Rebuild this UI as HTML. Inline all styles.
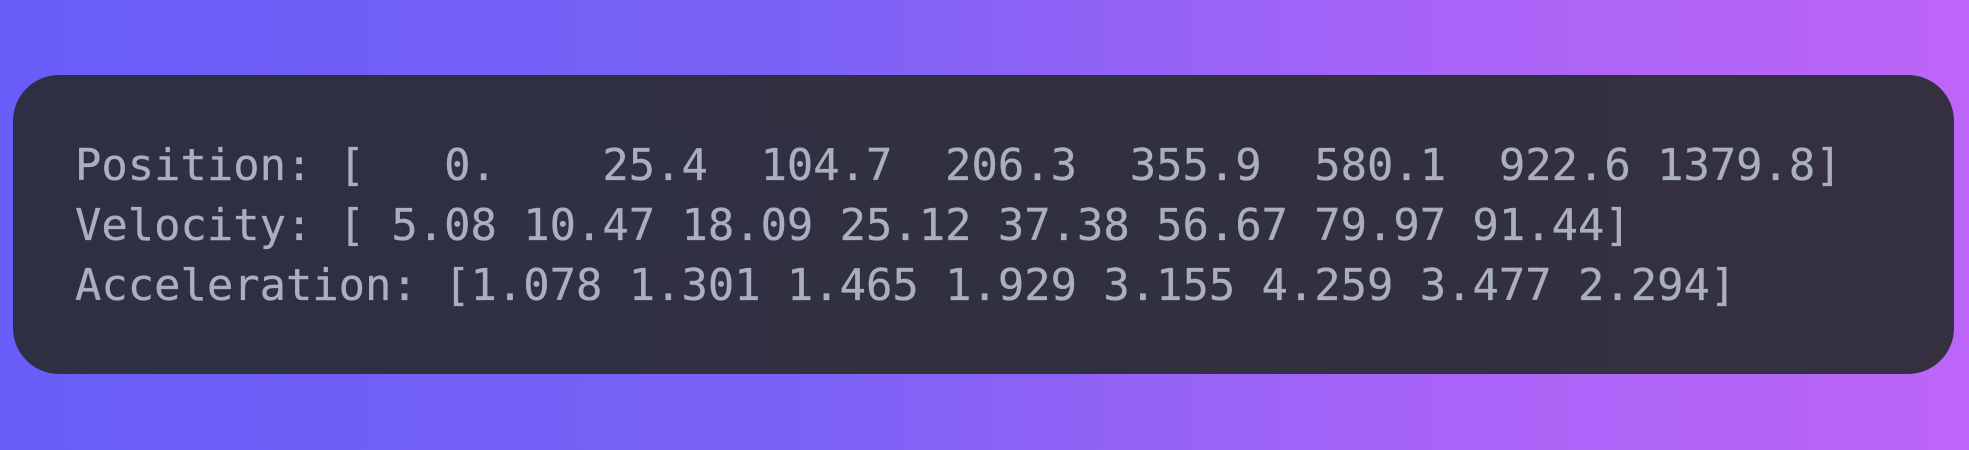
<!DOCTYPE html>
<html><head><meta charset="utf-8"><style>
html,body{margin:0;padding:0}
body{width:1969px;height:450px;background:linear-gradient(90deg,#685df8 0%,#7a62f6 40%,#a563f7 70%,#bd65f8 100%);position:relative;overflow:hidden}
.card{position:absolute;left:13px;top:75px;width:1941px;height:299px;border-radius:46px;background:linear-gradient(90deg,#2d3043,#34303f)}
pre{position:absolute;left:75px;top:136px;margin:0;font-family:"DejaVu Sans Mono","Liberation Mono",monospace;font-size:43.8px;line-height:60px;color:#a9afbf;-webkit-text-stroke:0.3px #a9afbf}
</style></head><body>
<div class="card"></div>
<pre>Position: [   0.    25.4  104.7  206.3  355.9  580.1  922.6 1379.8]
Velocity: [ 5.08 10.47 18.09 25.12 37.38 56.67 79.97 91.44]
Acceleration: [1.078 1.301 1.465 1.929 3.155 4.259 3.477 2.294]</pre>
</body></html>
